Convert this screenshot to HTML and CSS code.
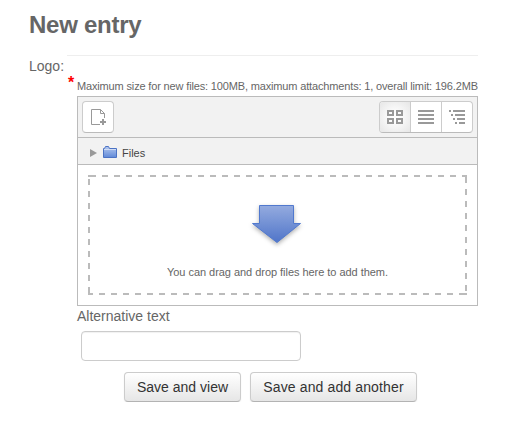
FILE: index.html
```html
<!DOCTYPE html>
<html lang="en">
<head>
<meta charset="utf-8">
<title>New entry</title>
<link rel="stylesheet" href="styles.css">
</head>
<body>
<h2>New entry</h2>
<form class="entry">
  <div class="label">Logo:</div>
  <div class="required">*</div>
  <div class="field">
    <p class="limits"><svg width="401" height="14"><text x="0" y="10" textLength="401">Maximum size for new files: 100MB, maximum attachments: 1, overall limit: 196.2MB</text></svg></p>
    <div class="manager">
      <div class="toolbar">
        <button type="button" class="add" aria-label="Add">
          <svg width="30" height="30"><path d="M17 22.500H8.500v-15h9l4 4V16M17.500 7.500v4h4" fill="none" stroke="#999"/><path d="M17 20h6M20 17v6" stroke="#999" stroke-width="2"/></svg>
        </button>
        <div class="views">
          <span class="view active"><svg width="30" height="30"><path d="M8 9h5v4h-5zM17 9h5v4h-5zM8 17h5v4h-5zM17 17h5v4h-5z" fill="none" stroke="#999" stroke-width="2"/></svg></span>
          <span class="view"><svg width="30" height="30"><path d="M7 9h16M7 13h16M7 17h16M7 21h16" stroke="#999" stroke-width="2"/></svg></span>
          <span class="view"><svg width="30" height="30"><path d="M7 9h2M11 9h12M9 13h2M13 13h10M11 17h2M15 17h8M13 21h2M17 21h6" stroke="#999" stroke-width="2"/></svg></span>
        </div>
      </div>
      <div class="path">
        <svg width="7" height="8"><path d="M0 0v8L7 4z" fill="#999"/></svg>
        <svg class="folder" width="14" height="12"><defs><linearGradient id="f" x2="0" y2="1"><stop stop-color="#b5c9ef"/><stop offset="1" stop-color="#6089d8"/></linearGradient></defs><path d="M.5 11.500V2.500h1l1-2h3l1 2h7v9z" fill="url(#f)" stroke="#4c73c4"/><path d="M1 3.500h12" stroke="#d0dcf5"/></svg>
        <span>Files</span>
      </div>
      <div class="drop">
        <svg class="arrow" width="60" height="54"><defs><linearGradient id="a" x2="0" y2="1"><stop stop-color="#94abdf"/><stop offset="1" stop-color="#5075c9"/></linearGradient></defs><path d="M12.500 5.500h34v18h7L30 42.500 5.500 23.500h7z" fill="url(#a)" stroke="#5179ce"/></svg>
        <p class="hint"><svg width="222" height="15"><text x="0" y="10" textLength="221">You can drag and drop files here to add them.</text></svg></p>
      </div>
    </div>
    <label for="alt">Alternative text</label>
    <input id="alt" type="text">
  </div>
</form>
<div class="actions"><button class="b1">Save and view</button><button class="b2">Save and add another</button></div>
</body>
</html>
```
FILE: styles.css
```css
* { box-sizing: border-box; }
body {
  margin: 0;
  padding: 10px 47px 0 29px;
  background: #fff;
  color: #666;
  font: 14px/20px "Liberation Sans", Arial, sans-serif;
}
h2 { margin: 0; height: 45px; font-size: 24px; line-height: 30px; letter-spacing: -.25px; }
svg { display: block; }
p { margin: 0; }
.entry { display: grid; grid-template-columns: 38px 10px 401px; margin: 0; }
.label { padding-top: 1px; white-space: nowrap; }
.required {
  padding: 17px 0 0 1px;
  color: #f00;
  font-size: 16px;
  font-weight: bold;
  line-height: 20px;
  border-top: 1px solid #eee;
}
.field { border-top: 1px solid #eee; }
.limits { height: 40px; padding-top: 24px; }
.limits text, .hint text { font-size: 11px; fill: #666; }
.manager { height: 210px; border: 1px solid #bbb; }
.toolbar {
  display: flex;
  justify-content: space-between;
  height: 41px;
  padding: 4px;
  background: #f2f2f2;
  border-bottom: 1px solid #bbb;
}
.add {
  width: 32px;
  height: 32px;
  padding: 0;
  background: #fff;
  border: 1px solid #ccc;
  border-bottom-color: #bbb;
  border-radius: 4px;
}
.views {
  display: flex;
  width: 94px;
  height: 32px;
  overflow: hidden;
  background: #fff;
  border: 1px solid #bbb;
  border-color: #ccc #ccc #bbb;
  border-radius: 4px;
}
.view { width: 31px; }
.view + .view { border-left: 1px solid #ccc; }
.active { background: radial-gradient(circle, #fff 15%, #e6e6e6 100%); }
.path {
  display: flex;
  align-items: center;
  height: 27px;
  padding: 4px 0 0 12px;
  background: #f2f2f2;
  border-bottom: 1px solid #bbb;
  color: #444;
  font-size: 11px;
}
.folder { margin: -2px 5px 0 6px; }
.drop {
  --dash: #bbb 0 6px, transparent 6px 12px;
  width: 379px;
  height: 120px;
  margin: 10px 0 0 10px;
  padding-top: 25px;
  background:
    linear-gradient(#bbb, #bbb) 0 0 / 8px 2px no-repeat,
    linear-gradient(#bbb, #bbb) 100% 100% / 8px 2px no-repeat,
    linear-gradient(#bbb, #bbb) 0 100% / 2px 8px no-repeat,
    linear-gradient(#bbb, #bbb) 100% 0 / 2px 8px no-repeat,
    repeating-linear-gradient(90deg, var(--dash)) 14px 0 / 372px 2px no-repeat,
    repeating-linear-gradient(270deg, var(--dash)) -7px 100% / 372px 2px no-repeat,
    repeating-linear-gradient(0deg, var(--dash)) 0 -2px / 2px 120px no-repeat,
    repeating-linear-gradient(180deg, var(--dash)) 100% 2px / 2px 120px no-repeat;
}
.arrow { margin: 0 0 0 159px; filter: drop-shadow(0 2px 2px rgba(0, 0, 0, .3)); }
.hint { padding: 12px 0 0 79px; }
label { display: block; }
input {
  display: block;
  width: 220px;
  height: 30px;
  margin: 5px 0 0 4px;
  border: 1px solid #ccc;
  border-radius: 4px;
  box-shadow: inset 0 1px 1px rgba(0, 0, 0, .06);
}
.actions { display: flex; gap: 9px; padding: 11px 0 0 95px; }
.actions button {
  height: 30px;
  padding: 0;
  border: 1px solid #ccc;
  border-bottom-color: #b3b3b3;
  border-radius: 4px;
  background: linear-gradient(#fff, #e6e6e6);
  box-shadow: 0 1px 2px rgba(0, 0, 0, .05);
  color: #333;
  font: 14px/20px "Liberation Sans", Arial, sans-serif;
  white-space: nowrap;
}
.b1 { width: 117px; }
.actions .b2 { width: 167px; letter-spacing: .13px; }
```
